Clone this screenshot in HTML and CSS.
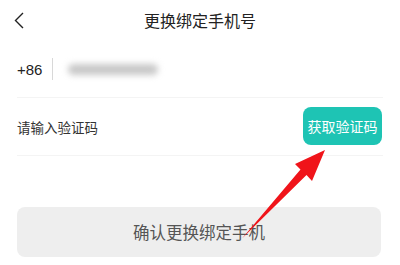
FILE: index.html
```html
<!DOCTYPE html>
<html lang="zh">
<head>
<meta charset="utf-8">
<link rel="stylesheet" href="styles.css">
</head>
<body>
<div class="page">
  <header class="topbar">
    <svg class="back" width="12" height="17" viewBox="0 0 12 17"><path d="M10 1 L2.5 8.5 L10 16" fill="none" stroke="#222" stroke-width="1.4"/></svg>
    <div class="title">更换绑定手机号</div>
    <span></span>
  </header>
  <main class="form">
    <div class="row phone">
      <span class="cc">+86</span>
      <span class="sep"></span>
      <span class="blur"></span>
    </div>
    <div class="row code">
      <span class="hint">请输入验证码</span>
      <button class="getcode">获取验证码</button>
    </div>
    <button class="confirm">确认更换绑定手机</button>
  </main>
  <svg class="arrow" width="400" height="265" viewBox="0 0 400 265">
    <polygon points="325,150 312,181 306.5,175 242,238.5 300.5,169.5 295,164" fill="#f0141a"/>
  </svg>
</div>
</body>
</html>
```
FILE: styles.css
```css
html, body { margin: 0; padding: 0; background: #fff; }
body { font-family: "Noto Sans CJK SC", "Noto Sans", sans-serif; color: #222; }
.page { position: relative; width: 400px; height: 265px; overflow: hidden; }
.topbar { display: grid; grid-template-columns: 40px 1fr 40px; align-items: center; height: 40px; }
.back { margin-left: 13px; }
.title { text-align: center; font-size: 16px; color: #222; }
.form { padding: 0 17px 0 17px; display: flex; flex-direction: column; }
.row { display: flex; align-items: center; border-bottom: 1px solid #f4f4f4; }
.phone { height: 57px; }
.cc { font-family: "Liberation Sans", Arial, sans-serif; font-size: 15px; color: #222; margin-top: 1px; }
.sep { width: 1px; height: 22px; background: #d8d8d8; margin-left: 10px; }
.blur { width: 90px; height: 11px; background: #c8c8c8; border-radius: 6px; filter: blur(3px); margin-left: 15px; margin-top: 1px; }
.code { height: 57px; justify-content: space-between; }
.hint { font-size: 13.5px; color: #333; }
.getcode { width: 79px; height: 38px; border: 0; border-radius: 8px; background: #1ec4b4; color: #fff; font-family: inherit; font-size: 14px; padding: 0; margin-right: 1px; margin-bottom: 1px; }
.confirm { margin-top: 51px; margin-right: 2px; height: 50px; border: 0; border-radius: 8px; background: #eeeeee; color: #555; font-family: inherit; font-size: 16.5px; padding: 0; }
.arrow { position: absolute; left: 0; top: 0; pointer-events: none; }
```
